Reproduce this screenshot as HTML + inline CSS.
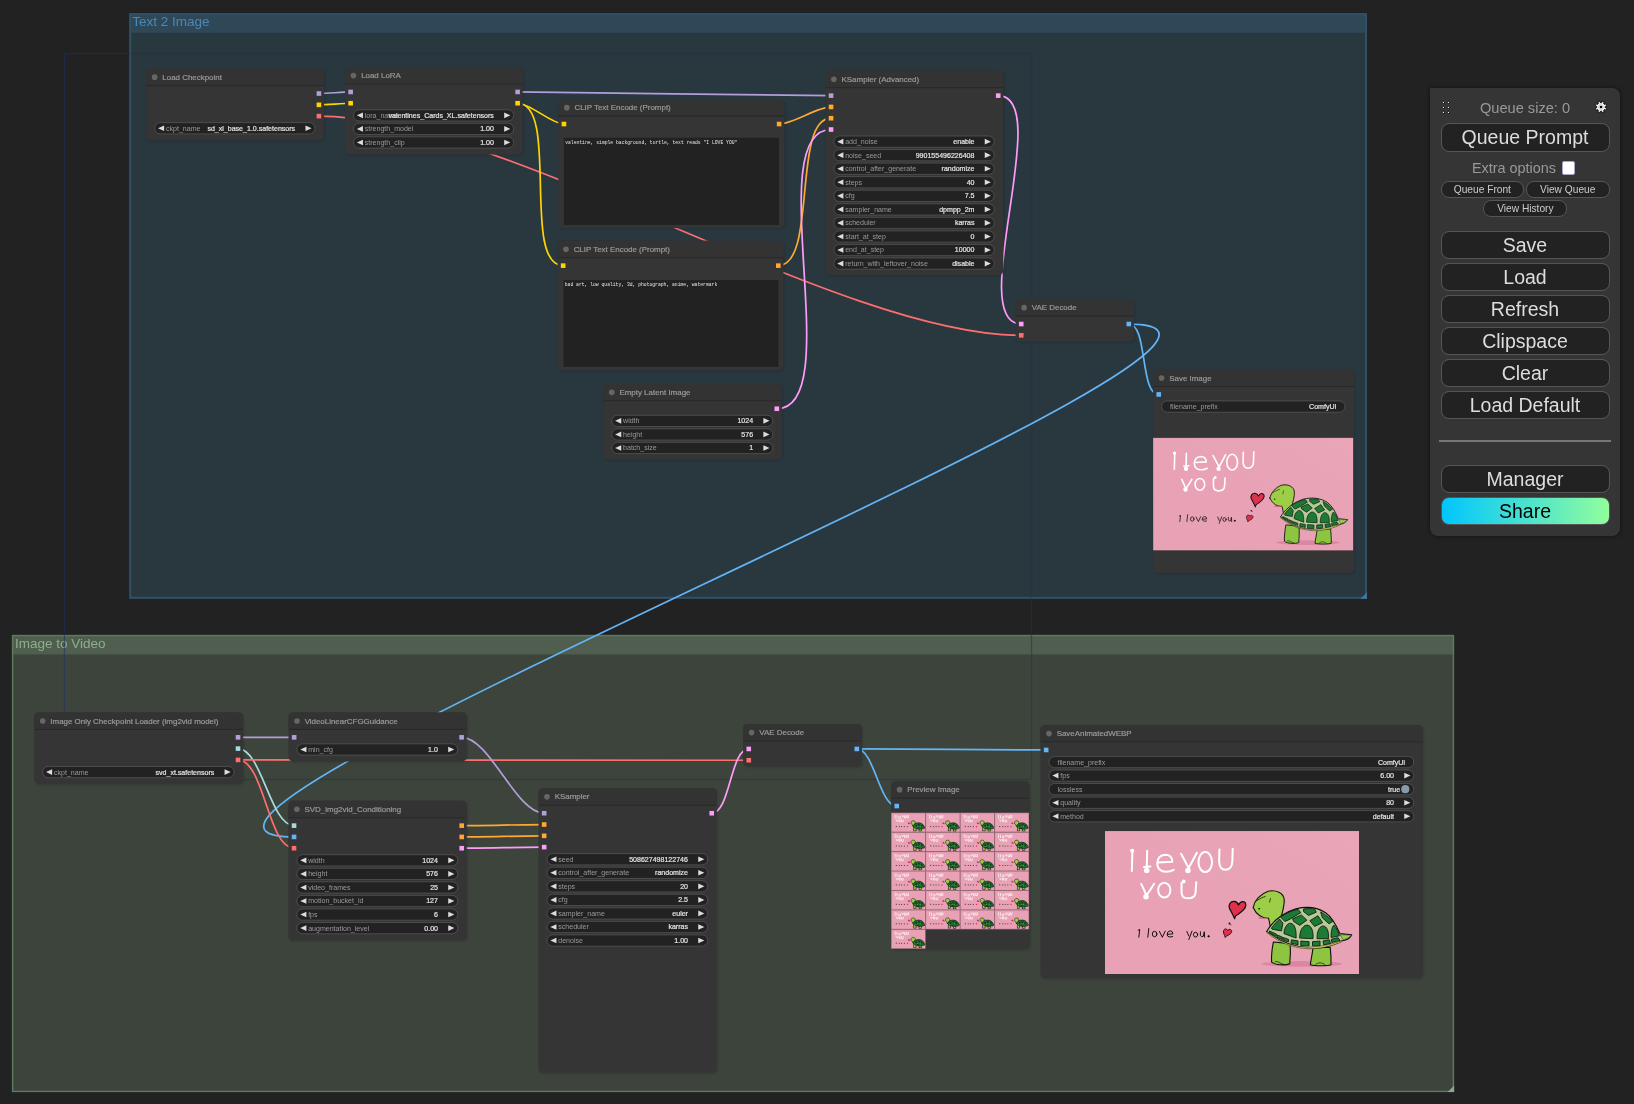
<!DOCTYPE html><html><head><meta charset="utf-8"><style>
svg,#panel{will-change:transform;} html,body{margin:0;padding:0;width:1634px;height:1104px;overflow:hidden;background:#222;}
svg text{font-family:"Liberation Sans",sans-serif;}
.tt{font-size:7.95px;fill:#9c9c9c;stroke:#9c9c9c;stroke-width:0.18px;}
.wl{font-size:7.05px;fill:#999;}
.wv{font-size:7.05px;fill:#e4e4e4;stroke:#e4e4e4;stroke-width:0.2px;text-anchor:end;}
.ta{font-family:"Liberation Mono",monospace;font-size:4.72px;fill:#e8e8e8;}

#panel{position:absolute;left:1430px;top:88px;width:190px;height:447.5px;background:#353535;border-radius:0 8px 8px 8px;box-shadow:0 0 4px rgba(0,0,0,0.5);font-family:"Liberation Sans",sans-serif;}
#panel .b{position:absolute;left:10.5px;width:169px;height:28.5px;box-sizing:border-box;background:#222;border:1.8px solid #555;border-radius:8px;background-clip:padding-box;color:#ddd;font-size:19.5px;text-align:center;line-height:26px;}
#panel .sm{position:absolute;height:17px;box-sizing:border-box;background:#222;border:1.8px solid #555;border-radius:8px;color:#ccc;font-size:10.2px;text-align:center;line-height:15.5px;}

</style></head><body>
<svg width="1634" height="1104" viewBox="0 0 1634 1104" style="position:absolute;left:0;top:0">
<defs><filter id="sh" x="-10%" y="-10%" width="120%" height="120%"><feGaussianBlur stdDeviation="1.2"/></filter>
<linearGradient id="pinkg" x1="0" y1="1" x2="1" y2="0"><stop offset="0" stop-color="#E6A0B4" stop-opacity="0"/><stop offset="1" stop-color="#ECA8BA" stop-opacity="0.6"/></linearGradient>
<symbol id="card" viewBox="0 0 1024 576" preserveAspectRatio="none">
<rect width="1024" height="576" fill="#E8A1B5"/>
<rect width="1024" height="576" fill="url(#pinkg)"/>
<g transform="translate(-19.5,-11.7) scale(0.6502)">
<g fill="none" stroke="#fff" stroke-width="12.5" stroke-linecap="round" stroke-linejoin="round">
<path d="M200,150 L197,265"/><circle cx="199" cy="140" r="7" fill="#fff"/>
<path d="M292,140 L289,262"/><circle cx="289" cy="262" r="11" fill="#fff"/><path d="M272,240 L312,238"/>
<path d="M360,212 L448,208 Q446,165 404,165 Q356,168 354,220 Q358,270 410,270 Q436,270 456,258"/>
<path d="M502,158 Q525,200 545,240 M600,152 Q572,205 545,255"/><circle cx="545" cy="262" r="11" fill="#fff"/>
<ellipse cx="652" cy="210" rx="42" ry="62"/>
<path d="M740,132 L738,205 Q740,258 776,258 Q818,258 820,205 L822,128"/>
<path d="M255,345 Q275,385 285,412 M335,345 Q305,395 285,420"/><circle cx="285" cy="425" r="11" fill="#fff"/>
<ellipse cx="398" cy="384" rx="38" ry="46"/>
<path d="M505,340 L505,400 Q508,435 545,435 Q588,435 592,400 L596,335"/><circle cx="518" cy="330" r="6" fill="#fff"/>
</g>
<g fill="none" stroke="#000" stroke-width="5.5" stroke-linecap="round" stroke-linejoin="round">
<path d="M236,632 L246,628 L240,676"/>
<path d="M302,622 L296,676"/>
<ellipse cx="338" cy="656" rx="14" ry="17"/>
<path d="M368,640 L386,676 L404,638"/>
<path d="M420,658 L452,655 Q450,636 434,636 Q414,640 416,662 Q420,680 450,672"/>
<path d="M538,640 L550,668 M570,638 L550,690"/>
<ellipse cx="592" cy="660" rx="13" ry="15"/>
<path d="M622,642 L622,664 Q628,678 640,670 L646,642 L648,676"/><circle cx="672" cy="670" r="4" fill="#111"/>
</g>
</g>
<g transform="translate(463.9,197.1) scale(0.3468)" stroke-linejoin="round" stroke-linecap="round">
<path d="M170,450 C150,400 125,360 110,330 C95,290 120,245 165,248 C195,250 210,275 215,290 C230,260 255,245 280,255 C310,268 305,310 275,345 C240,385 200,400 180,420 L170,445 Z" fill="#E0304C" stroke="#111" stroke-width="15"/>
<circle cx="110" cy="505" r="11" fill="#111"/><circle cx="125" cy="520" r="6" fill="#111"/>
<path d="M60,665 C55,640 30,610 42,585 C55,560 80,568 90,585 C100,570 125,568 135,590 C145,620 100,640 70,655 Z" fill="#E0304C" stroke="#111" stroke-width="10"/>
<ellipse cx="950" cy="975" rx="470" ry="34" fill="#DD86A4"/>
<path d="M620,720 C605,800 595,900 600,955 C640,990 760,995 810,975 C818,900 820,800 815,740 Z" fill="#8DC540" stroke="#111" stroke-width="13"/>
<path d="M640,950 C660,930 700,975 740,980" fill="none" stroke="#111" stroke-width="8"/>
<path d="M1080,790 C1072,870 1055,930 1050,985 C1100,1000 1250,1000 1290,985 C1292,900 1286,830 1280,780 Z" fill="#8DC540" stroke="#111" stroke-width="13"/>
<path d="M1110,985 C1140,950 1190,960 1220,985" fill="none" stroke="#111" stroke-width="8"/>
<path d="M385,320 C400,240 470,160 560,130 C650,110 740,150 746,230 C750,300 722,380 706,450 L696,580 L590,580 C578,510 572,465 562,440 C500,448 420,405 385,320 Z" fill="#9CCE48" stroke="#111" stroke-width="13"/>
<path d="M455,440 C490,448 530,444 565,436" fill="none" stroke="#D85A78" stroke-width="14"/>
<path d="M430,238 C460,218 500,198 525,192" fill="none" stroke="#111" stroke-width="9"/>
<path d="M586,215 L576,258" fill="none" stroke="#111" stroke-width="8"/>
<ellipse cx="455" cy="335" rx="12" ry="9" fill="#111"/>
</g>
<g transform="translate(645.2,297.9) scale(0.222)" stroke-linejoin="round">
<path d="M30,480 C120,330 300,150 560,70 C760,20 960,50 1100,140 C1230,230 1300,380 1360,520 L1575,540 C1550,600 1460,640 1400,650 C1200,760 960,790 780,780 C550,760 300,700 30,480 Z" fill="#B9C896" stroke="#111" stroke-width="20"/>
<g fill="#1B7A34" stroke="#111" stroke-width="15">
<path d="M280,215 C400,140 500,95 600,78 L650,140 L430,270 L360,300 Z"/>
<path d="M700,72 C780,60 850,62 905,75 L930,130 L790,190 L700,120 Z"/>
<path d="M1010,125 C1080,160 1160,220 1230,300 L1160,340 L1040,230 Z"/>
<path d="M500,250 L660,180 L760,275 L630,370 L520,300 Z"/>
<path d="M815,285 L960,195 L1045,320 L900,390 Z"/>
<path d="M115,420 C170,350 220,290 265,255 L325,330 L300,470 L130,440 Z"/>
<path d="M345,520 C340,430 400,330 460,330 C540,340 570,440 565,600 Z"/>
<path d="M630,600 C625,480 680,370 760,365 C850,370 880,480 872,612 Z"/>
<path d="M945,612 C940,500 980,385 1050,380 C1130,385 1160,480 1152,612 Z"/>
<path d="M1200,590 C1195,480 1220,390 1250,365 C1300,420 1340,500 1350,560 Z"/>
<path d="M80,470 L210,530 L200,565 L75,505 Z"/><path d="M225,545 L320,585 L310,625 L212,585 Z"/>
<path d="M335,592 L430,625 L428,672 L322,636 Z"/><path d="M480,632 L600,652 L600,722 L470,692 Z"/>
<path d="M650,655 L800,665 L800,742 L650,742 Z"/><path d="M862,665 L1000,655 L1000,742 L862,742 Z"/>
<path d="M1052,652 L1170,632 L1190,702 L1062,722 Z"/><path d="M1205,622 L1325,592 L1362,642 L1212,682 Z"/>
</g>
<path d="M1360,540 L1570,545 C1540,590 1470,620 1420,630 Z" fill="#9CCE48" stroke="#111" stroke-width="8"/>
<path d="M30,480 C300,690 550,765 780,765 C1000,765 1250,700 1420,640 L1405,662 C1200,760 960,798 780,795 C550,782 300,720 30,500 Z" fill="#C9CF55" stroke="#111" stroke-width="8"/>
</g>
</symbol>
<symbol id="thumb" viewBox="0 0 1024 576" preserveAspectRatio="none">
<rect width="1024" height="576" fill="#E8A1B5"/>
<g fill="none" stroke="#fff" stroke-width="20" stroke-linecap="square">
<path d="M120,80 L120,160 M175,90 L175,160 M230,120 L280,120 L280,165 L230,165 M320,90 L345,140 L370,90 M400,95 L400,160 L440,160 L440,95 M470,85 L470,150 L515,150 L515,85"/>
<path d="M150,215 L175,260 L200,215 M235,215 L235,270 L270,270 L270,215 M310,215 L310,270 L360,270 L360,215"/>
</g>
<g fill="#222"><rect x="140" y="395" width="26" height="30"/><rect x="230" y="400" width="26" height="26"/><rect x="300" y="400" width="26" height="26"/><rect x="380" y="400" width="26" height="26"/></g>
<rect x="500" y="290" width="45" height="45" fill="#E0304C"/><rect x="470" y="395" width="35" height="35" fill="#E0304C"/><rect x="540" y="320" width="20" height="20" fill="#111"/>
<ellipse cx="795" cy="530" rx="165" ry="14" fill="#DD86A4"/>
<rect x="672" y="430" width="70" height="110" fill="#8DC540" stroke="#111" stroke-width="16"/>
<rect x="830" y="440" width="70" height="105" fill="#8DC540" stroke="#111" stroke-width="16"/>
<path d="M590,300 C590,250 630,235 660,238 C720,240 725,290 715,330 L705,400 L640,400 L630,350 C600,340 590,320 590,300 Z" fill="#9CCE48" stroke="#111" stroke-width="16"/>
<path d="M650,405 C670,330 740,300 815,300 C920,300 970,370 990,430 L1020,440 C990,470 960,475 930,478 C850,500 720,490 650,405 Z" fill="#1B6F2E" stroke="#111" stroke-width="18"/>
<g fill="#0F3D18"><rect x="720" y="360" width="50" height="50"/><rect x="800" y="330" width="50" height="50"/><rect x="880" y="370" width="50" height="50"/><rect x="770" y="430" width="50" height="40"/></g>
<g fill="#B8C98A"><rect x="775" y="410" width="20" height="20"/><rect x="855" y="400" width="20" height="20"/><rect x="700" y="420" width="20" height="20"/></g>
</symbol>
</defs>
<rect width="1634" height="1104" fill="#222"/>
<rect x="129.2" y="13.2" width="1237.80" height="585.60" fill="#29373F"/>
<rect x="129.2" y="13.2" width="1237.80" height="19.6" fill="#2F4858"/>
<rect x="130.2" y="14.2" width="1235.80" height="583.60" fill="none" stroke="#30506A" stroke-width="2.0"/>
<path d="M1367.00,592.30 L1367.00,598.80 L1360.50,598.80Z" fill="#3F789E"/>
<text x="132.2" y="25.90" style="font-size:13.5px;fill:#4A88B5">Text 2 Image</text>
<rect x="11.9" y="634.9" width="1442.20" height="457.20" fill="#3C443C"/>
<rect x="11.9" y="634.9" width="1442.20" height="19.6" fill="#4F5E4F"/>
<rect x="12.6" y="635.6" width="1440.80" height="455.80" fill="none" stroke="#5E7A5E" stroke-width="1.4"/>
<path d="M1454.10,1085.60 L1454.10,1092.10 L1447.60,1092.10Z" fill="#88AA88"/>
<text x="14.9" y="647.60" style="font-size:13.5px;fill:#8DAF8A">Image to Video</text>
<rect x="64.5" y="53.5" width="967" height="726" fill="none" stroke="#1E3264" stroke-opacity="0.55" stroke-width="1.2"/>
<path d="M318.92,93.54 C326.86,93.54 342.70,91.94 350.64,91.94" fill="none" stroke="#B39DDB" stroke-width="1.7"/>
<path d="M318.92,104.83 C326.86,104.83 342.70,103.23 350.64,103.23" fill="none" stroke="#FFD500" stroke-width="1.7"/>
<path d="M318.92,116.12 C502.85,116.12 837.31,335.33 1021.25,335.33" fill="none" stroke="#FF6E6E" stroke-width="1.7"/>
<path d="M517.62,91.94 C595.98,91.94 752.68,95.64 831.04,95.64" fill="none" stroke="#B39DDB" stroke-width="1.7"/>
<path d="M517.62,103.23 C530.32,103.23 551.25,124.04 563.94,124.04" fill="none" stroke="#FFD500" stroke-width="1.7"/>
<path d="M517.62,103.23 C559.79,103.23 520.98,265.64 563.14,265.64" fill="none" stroke="#FFD500" stroke-width="1.7"/>
<path d="M779.12,124.04 C792.79,124.04 817.38,106.93 831.04,106.93" fill="none" stroke="#FFA931" stroke-width="1.7"/>
<path d="M778.32,265.64 C817.46,265.64 791.90,118.22 831.04,118.22" fill="none" stroke="#FFA931" stroke-width="1.7"/>
<path d="M776.82,408.74 C847.93,408.74 759.93,129.51 831.04,129.51" fill="none" stroke="#FF9CF9" stroke-width="1.7"/>
<path d="M998.22,95.64 C1055.61,95.64 963.86,324.04 1021.25,324.04" fill="none" stroke="#FF9CF9" stroke-width="1.7"/>
<path d="M1128.82,324.04 C1147.94,324.04 1139.62,394.44 1158.74,394.44" fill="none" stroke="#64B5F6" stroke-width="1.7"/>
<path d="M1128.82,324.04 C1373.76,324.04 49.11,836.93 294.04,836.93" fill="none" stroke="#64B5F6" stroke-width="1.7"/>
<path d="M238.02,737.34 C252.05,737.34 280.11,737.34 294.14,737.34" fill="none" stroke="#B39DDB" stroke-width="1.7"/>
<path d="M238.02,748.63 C261.83,748.63 270.24,825.64 294.04,825.64" fill="none" stroke="#A8DADC" stroke-width="1.7"/>
<path d="M238.02,759.92 C264.16,759.92 267.90,848.22 294.04,848.22" fill="none" stroke="#FF6E6E" stroke-width="1.7"/>
<path d="M238.02,759.92 C365.70,759.92 621.06,760.23 748.75,760.23" fill="none" stroke="#FF6E6E" stroke-width="1.7"/>
<path d="M461.62,737.34 C489.65,737.34 516.11,813.24 544.14,813.24" fill="none" stroke="#B39DDB" stroke-width="1.7"/>
<path d="M461.72,825.64 C482.33,825.64 523.54,824.53 544.14,824.53" fill="none" stroke="#FFA931" stroke-width="1.7"/>
<path d="M461.72,836.93 C482.33,836.93 523.54,835.82 544.14,835.82" fill="none" stroke="#FFA931" stroke-width="1.7"/>
<path d="M461.72,848.22 C482.33,848.22 523.54,847.11 544.14,847.11" fill="none" stroke="#FF9CF9" stroke-width="1.7"/>
<path d="M711.72,813.24 C730.27,813.24 730.20,748.94 748.75,748.94" fill="none" stroke="#FF9CF9" stroke-width="1.7"/>
<path d="M856.82,748.94 C874.24,748.94 879.33,806.04 896.75,806.04" fill="none" stroke="#64B5F6" stroke-width="1.7"/>
<path d="M856.82,748.94 C904.15,748.94 998.81,749.94 1046.14,749.94" fill="none" stroke="#64B5F6" stroke-width="1.7"/>
<rect x="147.40" y="69.90" width="177.80" height="71.60" rx="4.5" fill="#000" opacity="0.12" filter="url(#sh)"/>
<rect x="146.20" y="68.70" width="177.80" height="71.60" rx="4.5" fill="#353535"/>
<path d="M146.20,85.64 V73.20 Q146.20,68.70 150.70,68.70 H319.50 Q324.00,68.70 324.00,73.20 V85.64 Z" fill="#333"/>
<rect x="146.20" y="85.04" width="177.80" height="1.1" fill="#000" opacity="0.2"/>
<circle cx="154.67" cy="77.17" r="2.82" fill="#666"/>
<text x="162.33" y="79.79" class="tt">Load Checkpoint</text>
<rect x="316.62" y="91.24" width="4.6" height="4.6" fill="#B39DDB"/>
<rect x="316.62" y="102.53" width="4.6" height="4.6" fill="#FFD500"/>
<rect x="316.62" y="113.82" width="4.6" height="4.6" fill="#FF6E6E"/>
<rect x="154.67" y="122.61" width="160.30" height="11.29" rx="5.64" fill="#222" stroke="#555" stroke-width="0.8"/>
<path d="M164.15,125.43 L158.05,128.25 L164.15,131.08Z" fill="#ddd"/>
<path d="M305.48,125.43 L311.58,128.25 L305.48,131.08Z" fill="#ddd"/>
<text x="165.96" y="130.71" class="wl">ckpt_name</text>
<text x="295.17" y="130.71" class="wv">sd_xl_base_1.0.safetensors</text>
<rect x="346.20" y="68.30" width="177.70" height="87.30" rx="4.5" fill="#000" opacity="0.12" filter="url(#sh)"/>
<rect x="345.00" y="67.10" width="177.70" height="87.30" rx="4.5" fill="#353535"/>
<path d="M345.00,84.03 V71.60 Q345.00,67.10 349.50,67.10 H518.20 Q522.70,67.10 522.70,71.60 V84.03 Z" fill="#333"/>
<rect x="345.00" y="83.44" width="177.70" height="1.1" fill="#000" opacity="0.2"/>
<circle cx="353.47" cy="75.57" r="2.82" fill="#666"/>
<text x="361.13" y="78.19" class="tt">Load LoRA</text>
<rect x="348.34" y="89.64" width="4.6" height="4.6" fill="#B39DDB"/>
<rect x="348.34" y="100.93" width="4.6" height="4.6" fill="#FFD500"/>
<rect x="515.32" y="89.64" width="4.6" height="4.6" fill="#B39DDB"/>
<rect x="515.32" y="100.93" width="4.6" height="4.6" fill="#FFD500"/>
<rect x="353.47" y="109.72" width="160.20" height="11.29" rx="5.64" fill="#222" stroke="#555" stroke-width="0.8"/>
<path d="M362.95,112.54 L356.85,115.36 L362.95,118.19Z" fill="#ddd"/>
<path d="M504.18,112.54 L510.28,115.36 L504.18,118.19Z" fill="#ddd"/>
<text x="364.76" y="117.82" class="wl">lora_name</text>
<text x="493.88" y="117.82" class="wv">valentines_Cards_XL.safetensors</text>
<rect x="353.47" y="123.27" width="160.20" height="11.29" rx="5.64" fill="#222" stroke="#555" stroke-width="0.8"/>
<path d="M362.95,126.09 L356.85,128.91 L362.95,131.74Z" fill="#ddd"/>
<path d="M504.18,126.09 L510.28,128.91 L504.18,131.74Z" fill="#ddd"/>
<text x="364.76" y="131.37" class="wl">strength_model</text>
<text x="493.88" y="131.37" class="wv">1.00</text>
<rect x="353.47" y="136.82" width="160.20" height="11.29" rx="5.64" fill="#222" stroke="#555" stroke-width="0.8"/>
<path d="M362.95,139.64 L356.85,142.46 L362.95,145.28Z" fill="#ddd"/>
<path d="M504.18,139.64 L510.28,142.46 L504.18,145.28Z" fill="#ddd"/>
<text x="364.76" y="144.92" class="wl">strength_clip</text>
<text x="493.88" y="144.92" class="wv">1.00</text>
<rect x="559.50" y="100.40" width="225.90" height="128.90" rx="4.5" fill="#000" opacity="0.12" filter="url(#sh)"/>
<rect x="558.30" y="99.20" width="225.90" height="128.90" rx="4.5" fill="#353535"/>
<path d="M558.30,116.14 V103.70 Q558.30,99.20 562.80,99.20 H779.70 Q784.20,99.20 784.20,103.70 V116.14 Z" fill="#333"/>
<rect x="558.30" y="115.54" width="225.90" height="1.1" fill="#000" opacity="0.2"/>
<circle cx="566.77" cy="107.67" r="2.82" fill="#666"/>
<text x="574.43" y="110.29" class="tt">CLIP Text Encode (Prompt)</text>
<rect x="561.64" y="121.74" width="4.6" height="4.6" fill="#FFD500"/>
<rect x="776.82" y="121.74" width="4.6" height="4.6" fill="#FFA931"/>
<rect x="563.9" y="137.7" width="215.10" height="87.20" fill="#222"/>
<text x="565.20" y="144.00" class="ta">valentine, simple background, turtle, text reads &quot;I LOVE YOU&quot;</text>
<rect x="558.70" y="242.00" width="225.90" height="129.50" rx="4.5" fill="#000" opacity="0.12" filter="url(#sh)"/>
<rect x="557.50" y="240.80" width="225.90" height="129.50" rx="4.5" fill="#353535"/>
<path d="M557.50,257.74 V245.30 Q557.50,240.80 562.00,240.80 H778.90 Q783.40,240.80 783.40,245.30 V257.74 Z" fill="#333"/>
<rect x="557.50" y="257.13" width="225.90" height="1.1" fill="#000" opacity="0.2"/>
<circle cx="565.97" cy="249.27" r="2.82" fill="#666"/>
<text x="573.63" y="251.89" class="tt">CLIP Text Encode (Prompt)</text>
<rect x="560.85" y="263.34" width="4.6" height="4.6" fill="#FFD500"/>
<rect x="776.02" y="263.34" width="4.6" height="4.6" fill="#FFA931"/>
<rect x="563.5" y="280.0" width="215.00" height="86.80" fill="#222"/>
<text x="564.80" y="286.30" class="ta">bad art, low quality, 3d, photograph, anime, watermark</text>
<rect x="826.60" y="72.00" width="177.90" height="204.30" rx="4.5" fill="#000" opacity="0.12" filter="url(#sh)"/>
<rect x="825.40" y="70.80" width="177.90" height="204.30" rx="4.5" fill="#353535"/>
<path d="M825.40,87.73 V75.30 Q825.40,70.80 829.90,70.80 H998.80 Q1003.30,70.80 1003.30,75.30 V87.73 Z" fill="#333"/>
<rect x="825.40" y="87.14" width="177.90" height="1.1" fill="#000" opacity="0.2"/>
<circle cx="833.87" cy="79.27" r="2.82" fill="#666"/>
<text x="841.53" y="81.89" class="tt">KSampler (Advanced)</text>
<rect x="828.75" y="93.34" width="4.6" height="4.6" fill="#B39DDB"/>
<rect x="828.75" y="104.63" width="4.6" height="4.6" fill="#FFA931"/>
<rect x="828.75" y="115.92" width="4.6" height="4.6" fill="#FFA931"/>
<rect x="828.75" y="127.21" width="4.6" height="4.6" fill="#FF9CF9"/>
<rect x="995.92" y="93.34" width="4.6" height="4.6" fill="#FF9CF9"/>
<rect x="833.87" y="136.00" width="160.40" height="11.29" rx="5.64" fill="#222" stroke="#555" stroke-width="0.8"/>
<path d="M843.35,138.82 L837.25,141.64 L843.35,144.47Z" fill="#ddd"/>
<path d="M984.78,138.82 L990.88,141.64 L984.78,144.47Z" fill="#ddd"/>
<text x="845.16" y="144.10" class="wl">add_noise</text>
<text x="974.47" y="144.10" class="wv">enable</text>
<rect x="833.87" y="149.55" width="160.40" height="11.29" rx="5.64" fill="#222" stroke="#555" stroke-width="0.8"/>
<path d="M843.35,152.37 L837.25,155.19 L843.35,158.02Z" fill="#ddd"/>
<path d="M984.78,152.37 L990.88,155.19 L984.78,158.02Z" fill="#ddd"/>
<text x="845.16" y="157.65" class="wl">noise_seed</text>
<text x="974.47" y="157.65" class="wv">990155496226408</text>
<rect x="833.87" y="163.10" width="160.40" height="11.29" rx="5.64" fill="#222" stroke="#555" stroke-width="0.8"/>
<path d="M843.35,165.92 L837.25,168.74 L843.35,171.56Z" fill="#ddd"/>
<path d="M984.78,165.92 L990.88,168.74 L984.78,171.56Z" fill="#ddd"/>
<text x="845.16" y="171.20" class="wl">control_after_generate</text>
<text x="974.47" y="171.20" class="wv">randomize</text>
<rect x="833.87" y="176.64" width="160.40" height="11.29" rx="5.64" fill="#222" stroke="#555" stroke-width="0.8"/>
<path d="M843.35,179.47 L837.25,182.29 L843.35,185.11Z" fill="#ddd"/>
<path d="M984.78,179.47 L990.88,182.29 L984.78,185.11Z" fill="#ddd"/>
<text x="845.16" y="184.75" class="wl">steps</text>
<text x="974.47" y="184.75" class="wv">40</text>
<rect x="833.87" y="190.19" width="160.40" height="11.29" rx="5.64" fill="#222" stroke="#555" stroke-width="0.8"/>
<path d="M843.35,193.01 L837.25,195.84 L843.35,198.66Z" fill="#ddd"/>
<path d="M984.78,193.01 L990.88,195.84 L984.78,198.66Z" fill="#ddd"/>
<text x="845.16" y="198.29" class="wl">cfg</text>
<text x="974.47" y="198.29" class="wv">7.5</text>
<rect x="833.87" y="203.74" width="160.40" height="11.29" rx="5.64" fill="#222" stroke="#555" stroke-width="0.8"/>
<path d="M843.35,206.56 L837.25,209.38 L843.35,212.21Z" fill="#ddd"/>
<path d="M984.78,206.56 L990.88,209.38 L984.78,212.21Z" fill="#ddd"/>
<text x="845.16" y="211.84" class="wl">sampler_name</text>
<text x="974.47" y="211.84" class="wv">dpmpp_2m</text>
<rect x="833.87" y="217.29" width="160.40" height="11.29" rx="5.64" fill="#222" stroke="#555" stroke-width="0.8"/>
<path d="M843.35,220.11 L837.25,222.93 L843.35,225.76Z" fill="#ddd"/>
<path d="M984.78,220.11 L990.88,222.93 L984.78,225.76Z" fill="#ddd"/>
<text x="845.16" y="225.39" class="wl">scheduler</text>
<text x="974.47" y="225.39" class="wv">karras</text>
<rect x="833.87" y="230.84" width="160.40" height="11.29" rx="5.64" fill="#222" stroke="#555" stroke-width="0.8"/>
<path d="M843.35,233.66 L837.25,236.48 L843.35,239.30Z" fill="#ddd"/>
<path d="M984.78,233.66 L990.88,236.48 L984.78,239.30Z" fill="#ddd"/>
<text x="845.16" y="238.94" class="wl">start_at_step</text>
<text x="974.47" y="238.94" class="wv">0</text>
<rect x="833.87" y="244.38" width="160.40" height="11.29" rx="5.64" fill="#222" stroke="#555" stroke-width="0.8"/>
<path d="M843.35,247.21 L837.25,250.03 L843.35,252.85Z" fill="#ddd"/>
<path d="M984.78,247.21 L990.88,250.03 L984.78,252.85Z" fill="#ddd"/>
<text x="845.16" y="252.49" class="wl">end_at_step</text>
<text x="974.47" y="252.49" class="wv">10000</text>
<rect x="833.87" y="257.93" width="160.40" height="11.29" rx="5.64" fill="#222" stroke="#555" stroke-width="0.8"/>
<path d="M843.35,260.75 L837.25,263.58 L843.35,266.40Z" fill="#ddd"/>
<path d="M984.78,260.75 L990.88,263.58 L984.78,266.40Z" fill="#ddd"/>
<text x="845.16" y="266.03" class="wl">return_with_leftover_noise</text>
<text x="974.47" y="266.03" class="wv">disable</text>
<rect x="1016.80" y="300.40" width="118.30" height="42.40" rx="4.5" fill="#000" opacity="0.12" filter="url(#sh)"/>
<rect x="1015.60" y="299.20" width="118.30" height="42.40" rx="4.5" fill="#353535"/>
<path d="M1015.60,316.13 V303.70 Q1015.60,299.20 1020.10,299.20 H1129.40 Q1133.90,299.20 1133.90,303.70 V316.13 Z" fill="#333"/>
<rect x="1015.60" y="315.53" width="118.30" height="1.1" fill="#000" opacity="0.2"/>
<circle cx="1024.07" cy="307.67" r="2.82" fill="#666"/>
<text x="1031.74" y="310.29" class="tt">VAE Decode</text>
<rect x="1018.95" y="321.74" width="4.6" height="4.6" fill="#FF9CF9"/>
<rect x="1018.95" y="333.03" width="4.6" height="4.6" fill="#FF6E6E"/>
<rect x="1126.52" y="321.74" width="4.6" height="4.6" fill="#64B5F6"/>
<rect x="1154.30" y="370.80" width="200.90" height="203.30" rx="4.5" fill="#000" opacity="0.12" filter="url(#sh)"/>
<rect x="1153.10" y="369.60" width="200.90" height="203.30" rx="4.5" fill="#353535"/>
<path d="M1153.10,386.54 V374.10 Q1153.10,369.60 1157.60,369.60 H1349.50 Q1354.00,369.60 1354.00,374.10 V386.54 Z" fill="#333"/>
<rect x="1153.10" y="385.94" width="200.90" height="1.1" fill="#000" opacity="0.2"/>
<circle cx="1161.57" cy="378.07" r="2.82" fill="#666"/>
<text x="1169.23" y="380.69" class="tt">Save Image</text>
<rect x="1156.44" y="392.14" width="4.6" height="4.6" fill="#64B5F6"/>
<rect x="1161.57" y="400.93" width="183.40" height="11.29" rx="5.64" fill="#222" stroke="#555" stroke-width="0.8"/>
<text x="1170.03" y="409.03" class="wl">filename_prefix</text>
<text x="1336.50" y="409.03" class="wv">ComfyUI</text>
<use href="#card" x="1153.1" y="437.7" width="200.2" height="112.9"/>
<rect x="604.50" y="385.10" width="178.60" height="75.90" rx="4.5" fill="#000" opacity="0.12" filter="url(#sh)"/>
<rect x="603.30" y="383.90" width="178.60" height="75.90" rx="4.5" fill="#353535"/>
<path d="M603.30,400.83 V388.40 Q603.30,383.90 607.80,383.90 H777.40 Q781.90,383.90 781.90,388.40 V400.83 Z" fill="#333"/>
<rect x="603.30" y="400.23" width="178.60" height="1.1" fill="#000" opacity="0.2"/>
<circle cx="611.77" cy="392.37" r="2.82" fill="#666"/>
<text x="619.43" y="394.99" class="tt">Empty Latent Image</text>
<rect x="774.52" y="406.44" width="4.6" height="4.6" fill="#FF9CF9"/>
<rect x="611.77" y="415.23" width="161.10" height="11.29" rx="5.64" fill="#222" stroke="#555" stroke-width="0.8"/>
<path d="M621.25,418.05 L615.15,420.87 L621.25,423.70Z" fill="#ddd"/>
<path d="M763.38,418.05 L769.48,420.87 L763.38,423.70Z" fill="#ddd"/>
<text x="623.06" y="423.33" class="wl">width</text>
<text x="753.07" y="423.33" class="wv">1024</text>
<rect x="611.77" y="428.78" width="161.10" height="11.29" rx="5.64" fill="#222" stroke="#555" stroke-width="0.8"/>
<path d="M621.25,431.60 L615.15,434.42 L621.25,437.25Z" fill="#ddd"/>
<path d="M763.38,431.60 L769.48,434.42 L763.38,437.25Z" fill="#ddd"/>
<text x="623.06" y="436.88" class="wl">height</text>
<text x="753.07" y="436.88" class="wv">576</text>
<rect x="611.77" y="442.33" width="161.10" height="11.29" rx="5.64" fill="#222" stroke="#555" stroke-width="0.8"/>
<path d="M621.25,445.15 L615.15,447.97 L621.25,450.79Z" fill="#ddd"/>
<path d="M763.38,445.15 L769.48,447.97 L763.38,450.79Z" fill="#ddd"/>
<text x="623.06" y="450.43" class="wl">batch_size</text>
<text x="753.07" y="450.43" class="wv">1</text>
<rect x="35.40" y="713.70" width="208.90" height="71.60" rx="4.5" fill="#000" opacity="0.12" filter="url(#sh)"/>
<rect x="34.20" y="712.50" width="208.90" height="71.60" rx="4.5" fill="#353535"/>
<path d="M34.20,729.43 V717.00 Q34.20,712.50 38.70,712.50 H238.60 Q243.10,712.50 243.10,717.00 V729.43 Z" fill="#333"/>
<rect x="34.20" y="728.83" width="208.90" height="1.1" fill="#000" opacity="0.2"/>
<circle cx="42.67" cy="720.97" r="2.82" fill="#666"/>
<text x="50.34" y="723.59" class="tt">Image Only Checkpoint Loader (img2vid model)</text>
<rect x="235.72" y="735.04" width="4.6" height="4.6" fill="#B39DDB"/>
<rect x="235.72" y="746.33" width="4.6" height="4.6" fill="#A8DADC"/>
<rect x="235.72" y="757.62" width="4.6" height="4.6" fill="#FF6E6E"/>
<rect x="42.67" y="766.41" width="191.40" height="11.29" rx="5.64" fill="#222" stroke="#555" stroke-width="0.8"/>
<path d="M52.15,769.23 L46.05,772.05 L52.15,774.88Z" fill="#ddd"/>
<path d="M224.58,769.23 L230.68,772.05 L224.58,774.88Z" fill="#ddd"/>
<text x="53.96" y="774.51" class="wl">ckpt_name</text>
<text x="214.28" y="774.51" class="wv">svd_xt.safetensors</text>
<rect x="289.70" y="713.70" width="178.20" height="48.90" rx="4.5" fill="#000" opacity="0.12" filter="url(#sh)"/>
<rect x="288.50" y="712.50" width="178.20" height="48.90" rx="4.5" fill="#353535"/>
<path d="M288.50,729.43 V717.00 Q288.50,712.50 293.00,712.50 H462.20 Q466.70,712.50 466.70,717.00 V729.43 Z" fill="#333"/>
<rect x="288.50" y="728.83" width="178.20" height="1.1" fill="#000" opacity="0.2"/>
<circle cx="296.97" cy="720.97" r="2.82" fill="#666"/>
<text x="304.63" y="723.59" class="tt">VideoLinearCFGGuidance</text>
<rect x="291.84" y="735.04" width="4.6" height="4.6" fill="#B39DDB"/>
<rect x="459.32" y="735.04" width="4.6" height="4.6" fill="#B39DDB"/>
<rect x="296.97" y="743.83" width="160.70" height="11.29" rx="5.64" fill="#222" stroke="#555" stroke-width="0.8"/>
<path d="M306.45,746.65 L300.35,749.47 L306.45,752.30Z" fill="#ddd"/>
<path d="M448.18,746.65 L454.28,749.47 L448.18,752.30Z" fill="#ddd"/>
<text x="308.26" y="751.93" class="wl">min_cfg</text>
<text x="437.87" y="751.93" class="wv">1.0</text>
<rect x="289.60" y="802.00" width="178.40" height="139.60" rx="4.5" fill="#000" opacity="0.12" filter="url(#sh)"/>
<rect x="288.40" y="800.80" width="178.40" height="139.60" rx="4.5" fill="#353535"/>
<path d="M288.40,817.73 V805.30 Q288.40,800.80 292.90,800.80 H462.30 Q466.80,800.80 466.80,805.30 V817.73 Z" fill="#333"/>
<rect x="288.40" y="817.13" width="178.40" height="1.1" fill="#000" opacity="0.2"/>
<circle cx="296.87" cy="809.27" r="2.82" fill="#666"/>
<text x="304.53" y="811.89" class="tt">SVD_img2vid_Conditioning</text>
<rect x="291.74" y="823.34" width="4.6" height="4.6" fill="#A8DADC"/>
<rect x="291.74" y="834.63" width="4.6" height="4.6" fill="#64B5F6"/>
<rect x="291.74" y="845.92" width="4.6" height="4.6" fill="#FF6E6E"/>
<rect x="459.42" y="823.34" width="4.6" height="4.6" fill="#FFA931"/>
<rect x="459.42" y="834.63" width="4.6" height="4.6" fill="#FFA931"/>
<rect x="459.42" y="845.92" width="4.6" height="4.6" fill="#FF9CF9"/>
<rect x="296.87" y="854.71" width="160.90" height="11.29" rx="5.64" fill="#222" stroke="#555" stroke-width="0.8"/>
<path d="M306.35,857.53 L300.25,860.35 L306.35,863.18Z" fill="#ddd"/>
<path d="M448.28,857.53 L454.38,860.35 L448.28,863.18Z" fill="#ddd"/>
<text x="308.16" y="862.81" class="wl">width</text>
<text x="437.97" y="862.81" class="wv">1024</text>
<rect x="296.87" y="868.26" width="160.90" height="11.29" rx="5.64" fill="#222" stroke="#555" stroke-width="0.8"/>
<path d="M306.35,871.08 L300.25,873.90 L306.35,876.73Z" fill="#ddd"/>
<path d="M448.28,871.08 L454.38,873.90 L448.28,876.73Z" fill="#ddd"/>
<text x="308.16" y="876.36" class="wl">height</text>
<text x="437.97" y="876.36" class="wv">576</text>
<rect x="296.87" y="881.81" width="160.90" height="11.29" rx="5.64" fill="#222" stroke="#555" stroke-width="0.8"/>
<path d="M306.35,884.63 L300.25,887.45 L306.35,890.27Z" fill="#ddd"/>
<path d="M448.28,884.63 L454.38,887.45 L448.28,890.27Z" fill="#ddd"/>
<text x="308.16" y="889.91" class="wl">video_frames</text>
<text x="437.97" y="889.91" class="wv">25</text>
<rect x="296.87" y="895.35" width="160.90" height="11.29" rx="5.64" fill="#222" stroke="#555" stroke-width="0.8"/>
<path d="M306.35,898.18 L300.25,901.00 L306.35,903.82Z" fill="#ddd"/>
<path d="M448.28,898.18 L454.38,901.00 L448.28,903.82Z" fill="#ddd"/>
<text x="308.16" y="903.46" class="wl">motion_bucket_id</text>
<text x="437.97" y="903.46" class="wv">127</text>
<rect x="296.87" y="908.90" width="160.90" height="11.29" rx="5.64" fill="#222" stroke="#555" stroke-width="0.8"/>
<path d="M306.35,911.72 L300.25,914.55 L306.35,917.37Z" fill="#ddd"/>
<path d="M448.28,911.72 L454.38,914.55 L448.28,917.37Z" fill="#ddd"/>
<text x="308.16" y="917.00" class="wl">fps</text>
<text x="437.97" y="917.00" class="wv">6</text>
<rect x="296.87" y="922.45" width="160.90" height="11.29" rx="5.64" fill="#222" stroke="#555" stroke-width="0.8"/>
<path d="M306.35,925.27 L300.25,928.09 L306.35,930.92Z" fill="#ddd"/>
<path d="M448.28,925.27 L454.38,928.09 L448.28,930.92Z" fill="#ddd"/>
<text x="308.16" y="930.55" class="wl">augmentation_level</text>
<text x="437.97" y="930.55" class="wv">0.00</text>
<rect x="539.70" y="789.60" width="178.30" height="284.30" rx="4.5" fill="#000" opacity="0.12" filter="url(#sh)"/>
<rect x="538.50" y="788.40" width="178.30" height="284.30" rx="4.5" fill="#353535"/>
<path d="M538.50,805.33 V792.90 Q538.50,788.40 543.00,788.40 H712.30 Q716.80,788.40 716.80,792.90 V805.33 Z" fill="#333"/>
<rect x="538.50" y="804.73" width="178.30" height="1.1" fill="#000" opacity="0.2"/>
<circle cx="546.97" cy="796.87" r="2.82" fill="#666"/>
<text x="554.63" y="799.49" class="tt">KSampler</text>
<rect x="541.85" y="810.94" width="4.6" height="4.6" fill="#B39DDB"/>
<rect x="541.85" y="822.23" width="4.6" height="4.6" fill="#FFA931"/>
<rect x="541.85" y="833.52" width="4.6" height="4.6" fill="#FFA931"/>
<rect x="541.85" y="844.81" width="4.6" height="4.6" fill="#FF9CF9"/>
<rect x="709.42" y="810.94" width="4.6" height="4.6" fill="#FF9CF9"/>
<rect x="546.97" y="853.60" width="160.80" height="11.29" rx="5.64" fill="#222" stroke="#555" stroke-width="0.8"/>
<path d="M556.45,856.42 L550.35,859.24 L556.45,862.07Z" fill="#ddd"/>
<path d="M698.28,856.42 L704.38,859.24 L698.28,862.07Z" fill="#ddd"/>
<text x="558.26" y="861.70" class="wl">seed</text>
<text x="687.97" y="861.70" class="wv">508627498122746</text>
<rect x="546.97" y="867.15" width="160.80" height="11.29" rx="5.64" fill="#222" stroke="#555" stroke-width="0.8"/>
<path d="M556.45,869.97 L550.35,872.79 L556.45,875.62Z" fill="#ddd"/>
<path d="M698.28,869.97 L704.38,872.79 L698.28,875.62Z" fill="#ddd"/>
<text x="558.26" y="875.25" class="wl">control_after_generate</text>
<text x="687.97" y="875.25" class="wv">randomize</text>
<rect x="546.97" y="880.70" width="160.80" height="11.29" rx="5.64" fill="#222" stroke="#555" stroke-width="0.8"/>
<path d="M556.45,883.52 L550.35,886.34 L556.45,889.16Z" fill="#ddd"/>
<path d="M698.28,883.52 L704.38,886.34 L698.28,889.16Z" fill="#ddd"/>
<text x="558.26" y="888.80" class="wl">steps</text>
<text x="687.97" y="888.80" class="wv">20</text>
<rect x="546.97" y="894.24" width="160.80" height="11.29" rx="5.64" fill="#222" stroke="#555" stroke-width="0.8"/>
<path d="M556.45,897.07 L550.35,899.89 L556.45,902.71Z" fill="#ddd"/>
<path d="M698.28,897.07 L704.38,899.89 L698.28,902.71Z" fill="#ddd"/>
<text x="558.26" y="902.35" class="wl">cfg</text>
<text x="687.97" y="902.35" class="wv">2.5</text>
<rect x="546.97" y="907.79" width="160.80" height="11.29" rx="5.64" fill="#222" stroke="#555" stroke-width="0.8"/>
<path d="M556.45,910.61 L550.35,913.44 L556.45,916.26Z" fill="#ddd"/>
<path d="M698.28,910.61 L704.38,913.44 L698.28,916.26Z" fill="#ddd"/>
<text x="558.26" y="915.89" class="wl">sampler_name</text>
<text x="687.97" y="915.89" class="wv">euler</text>
<rect x="546.97" y="921.34" width="160.80" height="11.29" rx="5.64" fill="#222" stroke="#555" stroke-width="0.8"/>
<path d="M556.45,924.16 L550.35,926.98 L556.45,929.81Z" fill="#ddd"/>
<path d="M698.28,924.16 L704.38,926.98 L698.28,929.81Z" fill="#ddd"/>
<text x="558.26" y="929.44" class="wl">scheduler</text>
<text x="687.97" y="929.44" class="wv">karras</text>
<rect x="546.97" y="934.89" width="160.80" height="11.29" rx="5.64" fill="#222" stroke="#555" stroke-width="0.8"/>
<path d="M556.45,937.71 L550.35,940.53 L556.45,943.36Z" fill="#ddd"/>
<path d="M698.28,937.71 L704.38,940.53 L698.28,943.36Z" fill="#ddd"/>
<text x="558.26" y="942.99" class="wl">denoise</text>
<text x="687.97" y="942.99" class="wv">1.00</text>
<rect x="744.30" y="725.30" width="118.80" height="42.40" rx="4.5" fill="#000" opacity="0.12" filter="url(#sh)"/>
<rect x="743.10" y="724.10" width="118.80" height="42.40" rx="4.5" fill="#353535"/>
<path d="M743.10,741.03 V728.60 Q743.10,724.10 747.60,724.10 H857.40 Q861.90,724.10 861.90,728.60 V741.03 Z" fill="#333"/>
<rect x="743.10" y="740.43" width="118.80" height="1.1" fill="#000" opacity="0.2"/>
<circle cx="751.57" cy="732.57" r="2.82" fill="#666"/>
<text x="759.24" y="735.19" class="tt">VAE Decode</text>
<rect x="746.45" y="746.64" width="4.6" height="4.6" fill="#FF9CF9"/>
<rect x="746.45" y="757.93" width="4.6" height="4.6" fill="#FF6E6E"/>
<rect x="854.52" y="746.64" width="4.6" height="4.6" fill="#64B5F6"/>
<rect x="892.30" y="782.40" width="138.50" height="168.00" rx="4.5" fill="#000" opacity="0.12" filter="url(#sh)"/>
<rect x="891.10" y="781.20" width="138.50" height="168.00" rx="4.5" fill="#353535"/>
<path d="M891.10,798.13 V785.70 Q891.10,781.20 895.60,781.20 H1025.10 Q1029.60,781.20 1029.60,785.70 V798.13 Z" fill="#333"/>
<rect x="891.10" y="797.53" width="138.50" height="1.1" fill="#000" opacity="0.2"/>
<circle cx="899.57" cy="789.67" r="2.82" fill="#666"/>
<text x="907.24" y="792.29" class="tt">Preview Image</text>
<rect x="894.45" y="803.74" width="4.6" height="4.6" fill="#64B5F6"/>
<use href="#thumb" x="891.10" y="812.70" width="34.50" height="19.44"/>
<rect x="891.35" y="812.95" width="34.00" height="18.94" fill="none" stroke="#9a6a7a" stroke-width="0.5"/>
<use href="#thumb" x="925.60" y="812.70" width="34.50" height="19.44"/>
<rect x="925.85" y="812.95" width="34.00" height="18.94" fill="none" stroke="#9a6a7a" stroke-width="0.5"/>
<use href="#thumb" x="960.10" y="812.70" width="34.50" height="19.44"/>
<rect x="960.35" y="812.95" width="34.00" height="18.94" fill="none" stroke="#9a6a7a" stroke-width="0.5"/>
<use href="#thumb" x="994.60" y="812.70" width="34.50" height="19.44"/>
<rect x="994.85" y="812.95" width="34.00" height="18.94" fill="none" stroke="#9a6a7a" stroke-width="0.5"/>
<use href="#thumb" x="891.10" y="832.14" width="34.50" height="19.44"/>
<rect x="891.35" y="832.39" width="34.00" height="18.94" fill="none" stroke="#9a6a7a" stroke-width="0.5"/>
<use href="#thumb" x="925.60" y="832.14" width="34.50" height="19.44"/>
<rect x="925.85" y="832.39" width="34.00" height="18.94" fill="none" stroke="#9a6a7a" stroke-width="0.5"/>
<use href="#thumb" x="960.10" y="832.14" width="34.50" height="19.44"/>
<rect x="960.35" y="832.39" width="34.00" height="18.94" fill="none" stroke="#9a6a7a" stroke-width="0.5"/>
<use href="#thumb" x="994.60" y="832.14" width="34.50" height="19.44"/>
<rect x="994.85" y="832.39" width="34.00" height="18.94" fill="none" stroke="#9a6a7a" stroke-width="0.5"/>
<use href="#thumb" x="891.10" y="851.59" width="34.50" height="19.44"/>
<rect x="891.35" y="851.84" width="34.00" height="18.94" fill="none" stroke="#9a6a7a" stroke-width="0.5"/>
<use href="#thumb" x="925.60" y="851.59" width="34.50" height="19.44"/>
<rect x="925.85" y="851.84" width="34.00" height="18.94" fill="none" stroke="#9a6a7a" stroke-width="0.5"/>
<use href="#thumb" x="960.10" y="851.59" width="34.50" height="19.44"/>
<rect x="960.35" y="851.84" width="34.00" height="18.94" fill="none" stroke="#9a6a7a" stroke-width="0.5"/>
<use href="#thumb" x="994.60" y="851.59" width="34.50" height="19.44"/>
<rect x="994.85" y="851.84" width="34.00" height="18.94" fill="none" stroke="#9a6a7a" stroke-width="0.5"/>
<use href="#thumb" x="891.10" y="871.03" width="34.50" height="19.44"/>
<rect x="891.35" y="871.28" width="34.00" height="18.94" fill="none" stroke="#9a6a7a" stroke-width="0.5"/>
<use href="#thumb" x="925.60" y="871.03" width="34.50" height="19.44"/>
<rect x="925.85" y="871.28" width="34.00" height="18.94" fill="none" stroke="#9a6a7a" stroke-width="0.5"/>
<use href="#thumb" x="960.10" y="871.03" width="34.50" height="19.44"/>
<rect x="960.35" y="871.28" width="34.00" height="18.94" fill="none" stroke="#9a6a7a" stroke-width="0.5"/>
<use href="#thumb" x="994.60" y="871.03" width="34.50" height="19.44"/>
<rect x="994.85" y="871.28" width="34.00" height="18.94" fill="none" stroke="#9a6a7a" stroke-width="0.5"/>
<use href="#thumb" x="891.10" y="890.47" width="34.50" height="19.44"/>
<rect x="891.35" y="890.72" width="34.00" height="18.94" fill="none" stroke="#9a6a7a" stroke-width="0.5"/>
<use href="#thumb" x="925.60" y="890.47" width="34.50" height="19.44"/>
<rect x="925.85" y="890.72" width="34.00" height="18.94" fill="none" stroke="#9a6a7a" stroke-width="0.5"/>
<use href="#thumb" x="960.10" y="890.47" width="34.50" height="19.44"/>
<rect x="960.35" y="890.72" width="34.00" height="18.94" fill="none" stroke="#9a6a7a" stroke-width="0.5"/>
<use href="#thumb" x="994.60" y="890.47" width="34.50" height="19.44"/>
<rect x="994.85" y="890.72" width="34.00" height="18.94" fill="none" stroke="#9a6a7a" stroke-width="0.5"/>
<use href="#thumb" x="891.10" y="909.91" width="34.50" height="19.44"/>
<rect x="891.35" y="910.16" width="34.00" height="18.94" fill="none" stroke="#9a6a7a" stroke-width="0.5"/>
<use href="#thumb" x="925.60" y="909.91" width="34.50" height="19.44"/>
<rect x="925.85" y="910.16" width="34.00" height="18.94" fill="none" stroke="#9a6a7a" stroke-width="0.5"/>
<use href="#thumb" x="960.10" y="909.91" width="34.50" height="19.44"/>
<rect x="960.35" y="910.16" width="34.00" height="18.94" fill="none" stroke="#9a6a7a" stroke-width="0.5"/>
<use href="#thumb" x="994.60" y="909.91" width="34.50" height="19.44"/>
<rect x="994.85" y="910.16" width="34.00" height="18.94" fill="none" stroke="#9a6a7a" stroke-width="0.5"/>
<use href="#thumb" x="891.10" y="929.36" width="34.50" height="19.44"/>
<rect x="891.35" y="929.61" width="34.00" height="18.94" fill="none" stroke="#9a6a7a" stroke-width="0.5"/>
<rect x="1041.70" y="726.30" width="382.30" height="253.10" rx="4.5" fill="#000" opacity="0.12" filter="url(#sh)"/>
<rect x="1040.50" y="725.10" width="382.30" height="253.10" rx="4.5" fill="#353535"/>
<path d="M1040.50,742.03 V729.60 Q1040.50,725.10 1045.00,725.10 H1418.30 Q1422.80,725.10 1422.80,729.60 V742.03 Z" fill="#333"/>
<rect x="1040.50" y="741.43" width="382.30" height="1.1" fill="#000" opacity="0.2"/>
<circle cx="1048.97" cy="733.57" r="2.82" fill="#666"/>
<text x="1056.63" y="736.19" class="tt">SaveAnimatedWEBP</text>
<rect x="1043.85" y="747.64" width="4.6" height="4.6" fill="#64B5F6"/>
<rect x="1048.97" y="756.43" width="364.80" height="11.29" rx="5.64" fill="#222" stroke="#555" stroke-width="0.8"/>
<text x="1057.43" y="764.53" class="wl">filename_prefix</text>
<text x="1405.30" y="764.53" class="wv">ComfyUI</text>
<rect x="1048.97" y="769.98" width="364.80" height="11.29" rx="5.64" fill="#222" stroke="#555" stroke-width="0.8"/>
<path d="M1058.45,772.80 L1052.35,775.62 L1058.45,778.45Z" fill="#ddd"/>
<path d="M1404.28,772.80 L1410.38,775.62 L1404.28,778.45Z" fill="#ddd"/>
<text x="1060.26" y="778.08" class="wl">fps</text>
<text x="1393.98" y="778.08" class="wv">6.00</text>
<rect x="1048.97" y="783.53" width="364.80" height="11.29" rx="5.64" fill="#222" stroke="#555" stroke-width="0.8"/>
<text x="1057.43" y="791.63" class="wl">lossless</text>
<circle cx="1405.30" cy="789.17" r="4.06" fill="#89a"/>
<text x="1400.22" y="791.63" class="wv">true</text>
<rect x="1048.97" y="797.07" width="364.80" height="11.29" rx="5.64" fill="#222" stroke="#555" stroke-width="0.8"/>
<path d="M1058.45,799.90 L1052.35,802.72 L1058.45,805.54Z" fill="#ddd"/>
<path d="M1404.28,799.90 L1410.38,802.72 L1404.28,805.54Z" fill="#ddd"/>
<text x="1060.26" y="805.18" class="wl">quality</text>
<text x="1393.98" y="805.18" class="wv">80</text>
<rect x="1048.97" y="810.62" width="364.80" height="11.29" rx="5.64" fill="#222" stroke="#555" stroke-width="0.8"/>
<path d="M1058.45,813.44 L1052.35,816.27 L1058.45,819.09Z" fill="#ddd"/>
<path d="M1404.28,813.44 L1410.38,816.27 L1404.28,819.09Z" fill="#ddd"/>
<text x="1060.26" y="818.72" class="wl">method</text>
<text x="1393.98" y="818.72" class="wv">default</text>
<use href="#card" x="1104.9" y="831.1" width="254.1" height="142.9"/>
</svg>
<div id="panel">
<div style="position:absolute;left:13px;top:14px;width:1.2px;height:1.2px;background:#eee;box-shadow:0.6px 0.4px 0.6px #000;"></div><div style="position:absolute;left:13px;top:19px;width:1.2px;height:1.2px;background:#eee;box-shadow:0.6px 0.4px 0.6px #000;"></div><div style="position:absolute;left:13px;top:24px;width:1.2px;height:1.2px;background:#eee;box-shadow:0.6px 0.4px 0.6px #000;"></div><div style="position:absolute;left:18px;top:14px;width:1.2px;height:1.2px;background:#eee;box-shadow:0.6px 0.4px 0.6px #000;"></div><div style="position:absolute;left:18px;top:19px;width:1.2px;height:1.2px;background:#eee;box-shadow:0.6px 0.4px 0.6px #000;"></div><div style="position:absolute;left:18px;top:24px;width:1.2px;height:1.2px;background:#eee;box-shadow:0.6px 0.4px 0.6px #000;"></div>
<div style="position:absolute;left:0;width:190px;top:10.8px;text-align:center;color:#999;font-size:14.6px;line-height:18px;">Queue size: 0</div>
<svg style="position:absolute;left:163.4px;top:10.8px" width="16" height="16" viewBox="-8 -8 16 16"><path d="M0.61,-4.26 L1.40,-5.83 L3.13,-5.12 L2.58,-3.44 L3.44,-2.58 L5.12,-3.13 L5.83,-1.40 L4.26,-0.61 L4.26,0.61 L5.83,1.40 L5.12,3.13 L3.44,2.58 L2.58,3.44 L3.13,5.12 L1.40,5.83 L0.61,4.26 L-0.61,4.26 L-1.40,5.83 L-3.13,5.12 L-2.58,3.44 L-3.44,2.58 L-5.12,3.13 L-5.83,1.40 L-4.26,0.61 L-4.26,-0.61 L-5.83,-1.40 L-5.12,-3.13 L-3.44,-2.58 L-2.58,-3.44 L-3.13,-5.12 L-1.40,-5.83 L-0.61,-4.26Z" fill="#f2f2f2" stroke="#000" stroke-width="0.8" stroke-linejoin="round"/><circle r="2.4" fill="none" stroke="#bbb" stroke-width="0.6"/><circle r="1.3" fill="#000"/></svg>
<div class="b" style="top:34.5px;height:29px;line-height:27px;">Queue Prompt</div>
<div style="position:absolute;left:42px;top:71px;color:#999;font-size:14.4px;line-height:18px;">Extra options</div>
<div style="position:absolute;left:131.5px;top:73.4px;width:13.5px;height:13.5px;box-sizing:border-box;background:#fff;border:1.5px solid #a9a4c8;border-radius:2px;"></div>
<div class="sm" style="left:10.6px;top:92.5px;width:83.5px;">Queue Front</div>
<div class="sm" style="left:96px;top:92.5px;width:83.5px;">View Queue</div>
<div class="sm" style="left:53.4px;top:112.2px;width:84px;">View History</div>
<div class="b" style="top:142.6px">Save</div>
<div class="b" style="top:174.7px">Load</div>
<div class="b" style="top:206.7px">Refresh</div>
<div class="b" style="top:238.8px">Clipspace</div>
<div class="b" style="top:270.9px">Clear</div>
<div class="b" style="top:302.9px">Load Default</div>
<div style="position:absolute;left:9px;top:352px;width:172px;height:2px;background:#777;"></div>
<div class="b" style="top:376.9px">Manager</div>
<div class="b" style="top:408.6px;background:linear-gradient(90deg,#00C6FF,#92FE9D);color:#000;">Share</div>
</div>
</body></html>
